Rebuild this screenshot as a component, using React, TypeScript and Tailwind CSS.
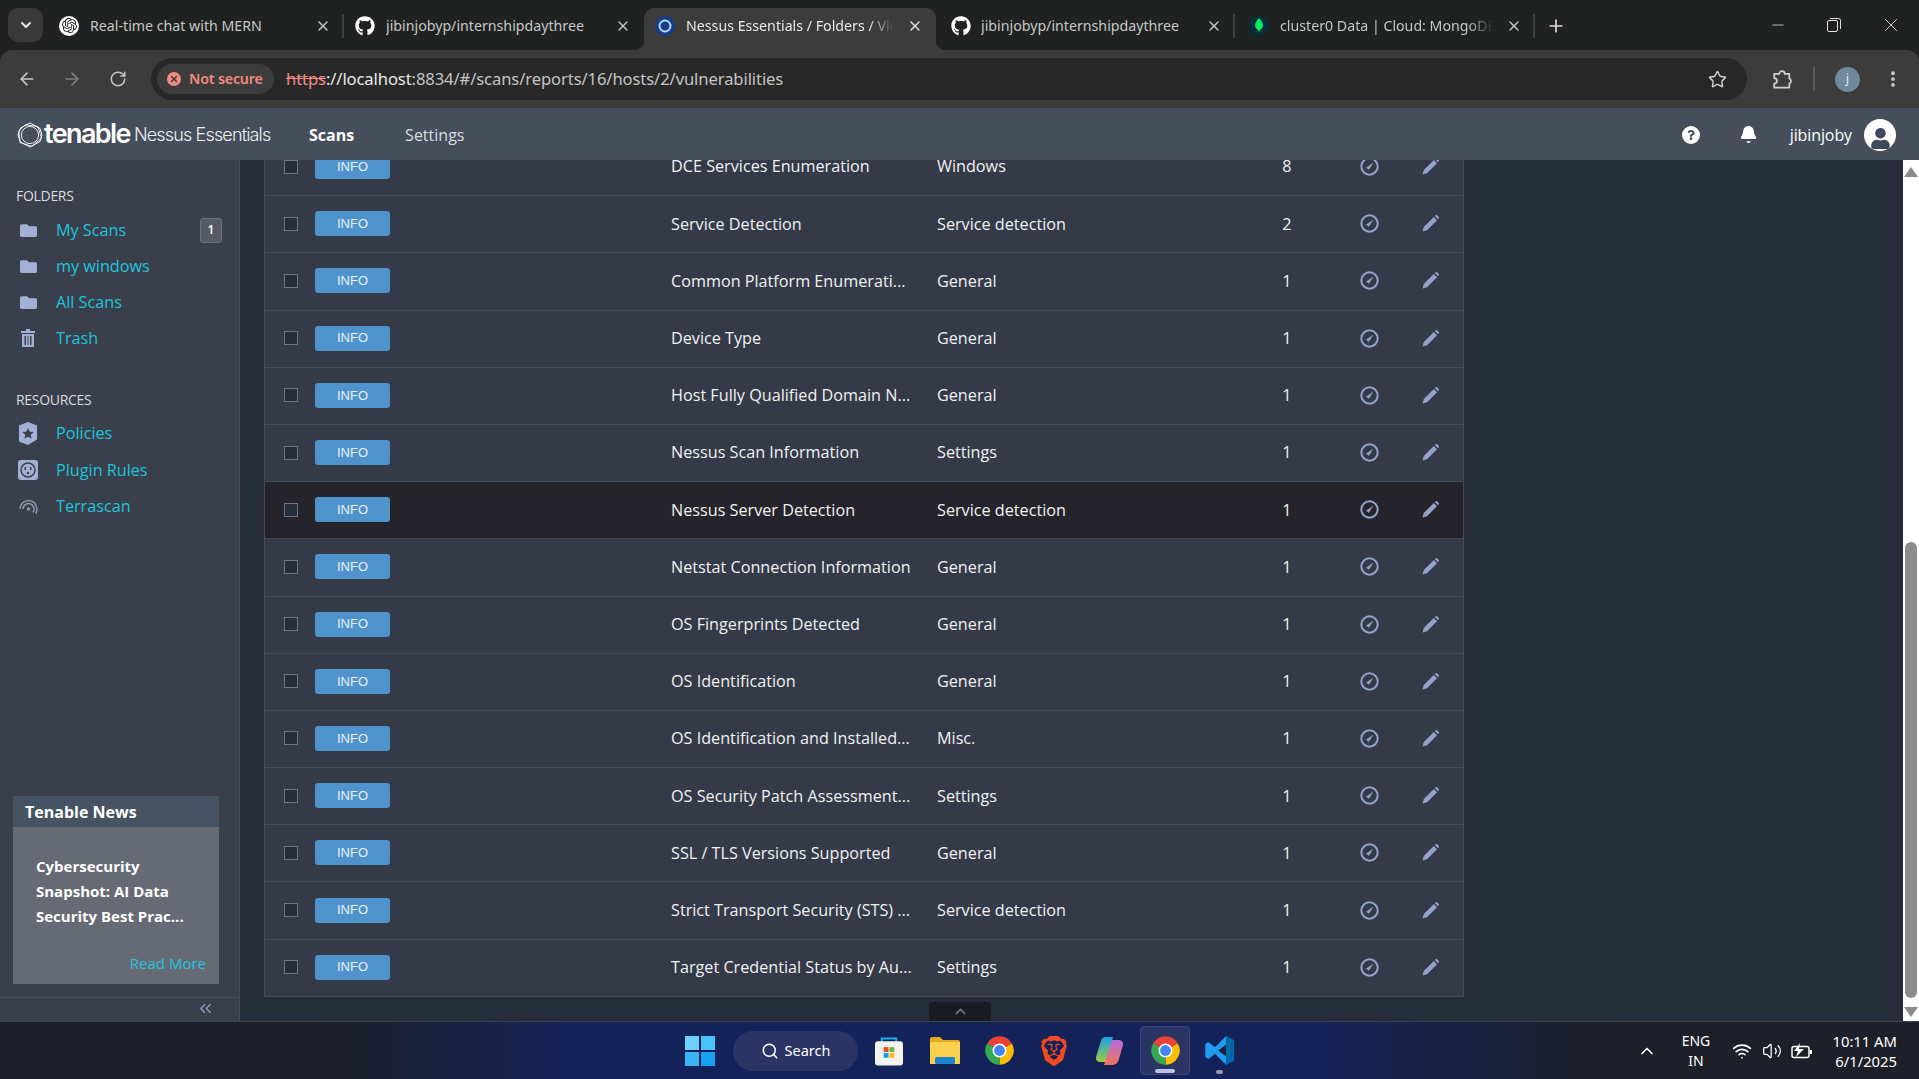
import { Bell, ChevronDown, ChevronUp, ChevronsLeft, EllipsisVertical, Plus, RotateCw, ArrowLeft, ArrowRight, Search, Star, X, Minus, Wifi, Volume2 } from "lucide-react";
import { FaGithub, FaUser, FaFolder, FaQuestion } from "react-icons/fa";
import { SiOpenai, SiBrave } from "react-icons/si";

const winFont = "font-['Noto_Sans',sans-serif]";

const rows = [
  ["DCE Services Enumeration", "Windows", "8"],
  ["Service Detection", "Service detection", "2"],
  ["Common Platform Enumerati...", "General", "1"],
  ["Device Type", "General", "1"],
  ["Host Fully Qualified Domain N...", "General", "1"],
  ["Nessus Scan Information", "Settings", "1"],
  ["Nessus Server Detection", "Service detection", "1"],
  ["Netstat Connection Information", "General", "1"],
  ["OS Fingerprints Detected", "General", "1"],
  ["OS Identification", "General", "1"],
  ["OS Identification and Installed...", "Misc.", "1"],
  ["OS Security Patch Assessment...", "Settings", "1"],
  ["SSL / TLS Versions Supported", "General", "1"],
  ["Strict Transport Security (STS) ...", "Service detection", "1"],
  ["Target Credential Status by Au...", "Settings", "1"],
];

function ChromeIcon({ size = 30 }: { size?: number }) {
  return (
    <svg width={size} height={size} viewBox="0 0 24 24">
      <path d="M12 12 2.47 6.5A11 11 0 0 1 21.53 6.5Z" fill="#ea4335" />
      <path d="M12 12 21.53 6.5A11 11 0 0 1 12 23Z" fill="#fbbc04" />
      <path d="M12 12 12 23A11 11 0 0 1 2.47 6.5Z" fill="#34a853" />
      <circle cx="12" cy="12" r="5.4" fill="#fff" />
      <circle cx="12" cy="12" r="4.2" fill="#4285f4" />
    </svg>
  );
}

function GaugeIcon() {
  return (
    <svg width="19" height="19" viewBox="0 0 19 19" fill="none">
      <circle cx="9.500" cy="9.500" r="8.200" stroke="#93a3cb" strokeWidth="2" />
      <path d="M6 10.800 13.500 5.500l-4.600 7.200Z" fill="#93a3cb" />
    </svg>
  );
}

function PencilIcon() {
  return (
    <svg width="17" height="17" viewBox="0 0 17 17">
      <path d="M0.5 16.5 1.8 12 11.8 2l3.2 3.2-10 10ZM12.8 1l1-.8a.9.9 0 0 1 1.2 0l1.8 1.8a.9.9 0 0 1 0 1.2l-.8 1Z" fill="#93a3cb" />
    </svg>
  );
}

function TenableMark() {
  return (
    <svg width="26" height="26" viewBox="0 0 26 26" fill="none" stroke="#fff" strokeWidth="1">
      <path d="M13 1 23 6.5 25 13 23 19.5 13 25 3.5 20 1 13 3.5 6Z" />
      <path d="M8 2.8 21 4.5 24.4 16 15 24.4 3 20.6 1.8 9Z" strokeWidth="0.8" />
      <circle cx="13" cy="13" r="8.6" strokeWidth="0.9" />
    </svg>
  );
}

function Tab({ title, icon, width, active, sep, fade }: { title: string; icon: React.ReactNode; width: string; active?: boolean; sep?: boolean; fade?: boolean }) {
  return (
    <div className={`relative flex h-[42px] shrink-0 items-center pb-[7px] ${width} ${active ? "rounded-t-[10px] bg-[#3c3c3c] text-[#e8e8e8]" : "text-[#c6c8c8]"}`}>
      {active && <span className="absolute bottom-0 left-[-10px] size-[10px] bg-[radial-gradient(circle_at_0_0,transparent_10px,#3c3c3c_10.5px)]" />}
      {active && <span className="absolute bottom-0 right-[-10px] size-[10px] bg-[radial-gradient(circle_at_100%_0,transparent_10px,#3c3c3c_10.5px)]" />}
      <span className="flex w-[42px] shrink-0 justify-center">{icon}</span>
      <span className={`min-w-0 flex-1 overflow-hidden whitespace-nowrap text-[14.200px] ${fade ? "[mask-image:linear-gradient(90deg,#000_88%,transparent)]" : ""}`}>{title}</span>
      <X size={16} strokeWidth={2} className="mx-[13px] shrink-0" />
      {sep && <span className="absolute right-0 h-[24px] w-[2px] bg-[#3f4141]" />}
    </div>
  );
}

function TabStrip() {
  return (
    <div className={`flex h-[50px] shrink-0 items-end bg-[#202222] pl-[8px] ${winFont}`}>
      <div className="mb-[8px] flex h-[34px] w-[35px] shrink-0 items-center justify-center rounded-[10px] bg-[#3a3a3a]">
        <ChevronDown size={16} strokeWidth={3} className="text-[#e6e6e6]" />
      </div>
      <div className="w-[5px] shrink-0" />
      <Tab
        width="w-[296px]"
        sep
        icon={
          <span className="flex size-[20px] items-center justify-center rounded-full bg-white">
            <SiOpenai size={15} className="text-[#222]" />
          </span>
        }
        title="Real-time chat with MERN"
      />
      <Tab width="w-[300px]" icon={<FaGithub size={20} className="text-white" />} title="jibinjobyp/internshipdaythree" />
      <Tab
        width="w-[292px]"
        active
        fade
        icon={
          <svg width="20" height="20" viewBox="0 0 20 20" fill="none">
            <circle cx="10" cy="10" r="10" fill="#123f85" />
            <circle cx="10" cy="10" r="5.5" stroke="#b7d3ef" strokeWidth="2" />
          </svg>
        }
        title="Nessus Essentials / Folders / Vie"
      />
      <Tab width="w-[299px] pl-[3px]" sep icon={<FaGithub size={20} className="ml-[2px] text-white" />} title="jibinjobyp/internshipdaythree" />
      <Tab
        width="w-[300px] pl-[3px]"
        sep
        fade
        icon={
          <span className="flex size-[20px] items-center justify-center rounded-full bg-[#062f3a]">
            <svg width="8" height="15" viewBox="0 0 8 15">
              <path d="M4 0C6 2.5 8 4.5 8 7.500 8 10 5.500 11.500 4.500 12.500L4 15 3.500 12.500C2.500 11.500 0 10 0 7.500 0 4.500 2 2.500 4 0Z" fill="#00ed64" />
            </svg>
          </span>
        }
        title="cluster0 Data | Cloud: MongoDE"
      />
      <div className="flex h-[42px] w-[42px] shrink-0 items-center justify-center pb-[7px]">
        <Plus size={20} strokeWidth={2} className="text-[#dcdcdc]" />
      </div>
      <div className="flex h-[50px] flex-1 items-center justify-end text-[#e4e4e4]">
        <span className="flex w-[56px] justify-center"><Minus size={18} strokeWidth={1} /></span>
        <span className="flex w-[56px] justify-center">
          <svg width="14" height="14" viewBox="0 0 14 14" fill="none" stroke="currentColor">
            <rect x="0.500" y="2.500" width="10" height="11" rx="1.500" />
            <path d="M3 .5h8.500a2 2 0 0 1 2 2V11" />
          </svg>
        </span>
        <span className="flex w-[57px] justify-center"><X size={22} strokeWidth={1} /></span>
      </div>
    </div>
  );
}

function Toolbar() {
  return (
    <div className={`flex h-[58px] shrink-0 items-center rounded-t-[12px] bg-[#3c3c3c] ${winFont}`}>
      <div className="flex w-[151px] shrink-0 items-center pl-[17px] text-[#c7c7c7]">
        <ArrowLeft size={20} strokeWidth={2} />
        <ArrowRight size={20} strokeWidth={2} className="ml-[25px] text-[#7e7e7e]" />
        <RotateCw size={18} strokeWidth={2} className="ml-[27px]" />
      </div>
      <div className="flex h-[42px] w-[1596px] shrink-0 items-center rounded-full bg-[#282828] pl-[6px] pr-[20px]">
        <div className="flex h-[30px] w-[117px] shrink-0 items-center rounded-full bg-[#3c3c3c] pl-[10px] text-[14.300px] font-semibold tracking-[-0.2px] text-[#f28b82]">
          <span className="mr-[8px] flex size-[14px] items-center justify-center rounded-full bg-[#f28b82]">
            <X size={10} strokeWidth={3.5} className="text-[#3c3c3c]" />
          </span>
          Not secure
        </div>
        <div className="ml-[12px] flex-1 whitespace-nowrap text-[16.600px] tracking-[-0.1px] text-[#e8e8e8]">
          <span className="text-[#f28b82] line-through decoration-[#f28b82]">https</span>
          <span>://localhost</span>
          <span className="text-[#c4c4c4]">:8834/#/scans/reports/16/hosts/2/vulnerabilities</span>
        </div>
        <Star size={19} strokeWidth={1.8} className="text-[#d0d0d0]" />
      </div>
      <svg width="22" height="22" viewBox="0 0 24 24" fill="none" stroke="#d0d0d0" strokeWidth="1.900" className="ml-[24px] shrink-0">
        <path d="M3.500 6.500h5.500a3 3 0 0 1 6 0h5v5a3 3 0 0 1 0 5.500v4.500H3.500v-4.500a3 3 0 0 0 0-6Z" strokeLinejoin="round" />
      </svg>
      <span className="ml-[20px] h-[24px] w-[2px] bg-[#5a5a5a]" />
      <span className="ml-[20px] flex size-[25px] items-center justify-center rounded-full bg-[#6f8a9c] text-[13px] text-[#dfe6ea]">j</span>
      <EllipsisVertical size={20} strokeWidth={2.5} className="ml-[23px] text-[#d0d0d0]" />
    </div>
  );
}

function AppHeader() {
  return (
    <div className="flex h-[52px] shrink-0 items-center bg-[#454e5a] pl-[17px] pt-[1px] font-['Open_Sans',sans-serif] text-white">
      <TenableMark />
      <span className="ml-[1px] font-['Inter',sans-serif] text-[27px] font-semibold tracking-[-1.600px]">tenable</span>
      <span className="ml-[4px] w-[136px] whitespace-nowrap font-['Inter',sans-serif] text-[18px] font-light tracking-[-0.85px] text-[#eef0f2]">Nessus Essentials</span>
      <span className="ml-[39px] text-[16px] font-bold">Scans</span>
      <span className="ml-[51px] text-[16px] text-[#d8dde3]">Settings</span>
      <div className="ml-auto flex items-center pr-[23px]">
        <span className="flex size-[18px] items-center justify-center rounded-full bg-white">
          <FaQuestion size={10} className="text-[#454e5a]" />
        </span>
        <Bell size={19} fill="#fff" strokeWidth={1.500} className="ml-[39px]" />
        <span className="ml-[32px] text-[16px] tracking-[-0.1px]">jibinjoby</span>
        <span className="ml-[12px] flex size-[32px] items-end justify-center overflow-hidden rounded-full bg-white">
          <FaUser size={21} className="mb-[2px] text-[#3d4a5c]" />
        </span>
      </div>
    </div>
  );
}

function SideItem({ icon, label, height, badge }: { icon: React.ReactNode; label: string; height: string; badge?: boolean }) {
  return (
    <div className={`flex items-center pl-[18px] ${height}`}>
      <span className="flex w-[20px] justify-center">{icon}</span>
      <span className="ml-[18px] text-[16.200px] text-[#1fc4dd]">{label}</span>
      {badge && (
        <span className="ml-auto mr-[17px] flex h-[25px] w-[22px] items-center justify-center rounded-[3px] border border-[#6b707a] bg-[#555a66] text-[12px] font-semibold text-white">1</span>
      )}
    </div>
  );
}

function Sidebar() {
  const folder = <FaFolder size={17} className="text-[#a3b1d6]" />;
  return (
    <aside className="flex w-[240px] shrink-0 flex-col border-r border-[#454b57] bg-[#3a404b] font-['Open_Sans',sans-serif]">
      <div className="pl-[16px] pt-[25px] text-[14px] tracking-[-0.3px] text-[#d9dbdf]">FOLDERS</div>
      <div className="mt-[6px]">
        <SideItem height="h-[36px]" icon={folder} label="My Scans" badge />
        <SideItem height="h-[36px]" icon={folder} label="my windows" />
        <SideItem height="h-[36px]" icon={folder} label="All Scans" />
        <SideItem
          height="h-[36px]"
          label="Trash"
          icon={
            <svg width="14" height="18" viewBox="0 0 14 18" fill="#a3b1d6">
              <path d="M5 0h4v2h5v2H0V2h5ZM1 5h12v12a1 1 0 0 1-1 1H2a1 1 0 0 1-1-1ZM3.500 7v9h1.500V7Zm3 0v9h1V7Zm2.500 0v9h1.500V7Z" fillRule="evenodd" />
            </svg>
          }
        />
      </div>
      <div className="mt-[33px] pl-[16px] text-[14px] tracking-[-0.3px] text-[#d9dbdf]">RESOURCES</div>
      <div className="mt-[5px]">
        <SideItem
          height="h-[37px]"
          label="Policies"
          icon={
            <svg width="18" height="23" viewBox="0 0 18 23">
              <path d="M9 0 18 3.500V17.500L9 23 0 19.500V3.500Z" fill="#a3b1d6" />
              <path d="m9 6 1.700 3.700 4 .4-3 2.700.9 4L9 14.700 5.400 16.800l.9-4-3-2.700 4-.4Z" fill="#3a404b" />
            </svg>
          }
        />
        <SideItem
          height="h-[36px]"
          label="Plugin Rules"
          icon={
            <svg width="20" height="20" viewBox="0 0 20 20">
              <rect width="20" height="20" rx="3" fill="#a3b1d6" />
              <circle cx="10" cy="10" r="7" fill="none" stroke="#3a404b" strokeWidth="1.500" />
              <rect x="6.500" y="7" width="1.500" height="3" fill="#3a404b" />
              <rect x="12" y="7" width="1.500" height="3" fill="#3a404b" />
              <circle cx="10" cy="13" r="1.200" fill="#3a404b" />
            </svg>
          }
        />
        <SideItem
          height="h-[36px]"
          label="Terrascan"
          icon={
            <svg width="19" height="17" viewBox="0 0 19 17" fill="none" stroke="#8f98b0" strokeWidth="1.500">
              <path d="M1 11a8.500 8.500 0 0 1 17 0c0 2-.5 3.500-1.200 5" />
              <path d="M4 11a5.500 5.500 0 0 1 11 0c0 1.500-.4 2.500-1 3.500" />
              <circle cx="9.500" cy="11" r="1.700" fill="#8f98b0" stroke="none" />
            </svg>
          }
        />
      </div>
      <div className="mt-auto mx-[13px] mb-[13px] w-[206px]">
        <div className="flex h-[31px] items-center bg-[#465362] pl-[12px] text-[16px] font-bold text-white">Tenable News</div>
        <div className="flex h-[157px] flex-col bg-[#666a75] pl-[23px] pr-[13px]">
          <div className="pt-[27px] text-[15px] font-bold leading-[25px] text-white">
            Cybersecurity
            <br />
            Snapshot: AI Data
            <br />
            Security Best Prac...
          </div>
          <div className="mt-[23px] text-right text-[15px] text-[#1fc4dd]">Read More</div>
        </div>
      </div>
      <div className="flex h-[24px] items-center justify-end border-t border-[#4a505c] pb-[2px] pr-[24px]">
        <ChevronsLeft size={19} strokeWidth={1.500} className="text-[#93a3cb]" />
      </div>
    </aside>
  );
}

function VulnRow({ name, family, count, hovered }: { name: string; family: string; count: string; hovered: boolean }) {
  return (
    <div className={`flex h-[57.200px] items-center border-b border-[#454b57] pb-[1px] pl-[19px] text-[16.200px] text-[#f1f2f4] ${hovered ? "bg-[#26242b]" : "bg-[#343a47]"}`}>
      <span className="size-[14px] shrink-0 border border-[#6a7688] bg-[#252d3b]" />
      <span className="ml-[17px] flex h-[25px] w-[75px] shrink-0 items-center justify-center rounded-[3px] bg-[#4e93cb] font-['Liberation_Sans',sans-serif] text-[13px] text-[#e9f1f8]">INFO</span>
      <span className="ml-[281px] w-[266px] shrink-0 whitespace-nowrap">{name}</span>
      <span className="w-[342px] shrink-0 whitespace-nowrap">{family}</span>
      <span className="w-[16px] shrink-0 text-center">{count}</span>
      <span className="ml-[65px] flex w-[19px] shrink-0"><GaugeIcon /></span>
      <span className="ml-[43px] flex w-[17px] shrink-0"><PencilIcon /></span>
    </div>
  );
}

function Scrollbar() {
  return (
    <div className="flex w-[16px] shrink-0 flex-col items-center bg-white">
      <svg width="14" height="10" viewBox="0 0 14 10" className="mt-[7px] shrink-0"><path d="M7 0 14 10H0Z" fill="#8c8c8c" /></svg>
      <div className="mt-[365px] h-[456px] w-[12px] shrink-0 rounded-[6px] bg-[#8c8c8c]" />
      <svg width="14" height="10" viewBox="0 0 14 10" className="mt-[9px] shrink-0"><path d="M7 10 14 0H0Z" fill="#8c8c8c" /></svg>
    </div>
  );
}

function Main() {
  return (
    <main className="relative flex min-w-0 flex-1 flex-col overflow-hidden bg-[#252d3b] pl-[24px] font-['Open_Sans',sans-serif]">
      <div className="mt-[-21px] w-[1200px] border-x border-[#454b57]">
        {rows.map((r) => (
          <VulnRow key={r[0]} name={r[0]} family={r[1]} count={r[2]} hovered={r[0] === "Nessus Server Detection"} />
        ))}
      </div>
      <div className="absolute bottom-0 left-[689px] flex h-[19px] w-[62px] items-center justify-center rounded-t-[4px] bg-[#181b21]">
        <ChevronUp size={17} strokeWidth={2.500} className="text-[#6f7378]" />
      </div>
    </main>
  );
}

function Taskbar() {
  return (
    <div className={`flex h-[58px] shrink-0 items-center border-t border-[#3e444e] bg-[linear-gradient(90deg,#1d2029_17%,#14225a_30%,#14225a_68%,#1d2029_84%)] pl-[685px] text-white ${winFont}`}>
      <svg width="30" height="30" viewBox="0 0 30 30" className="shrink-0">
        <rect width="14" height="14" fill="#6cd1fb" />
        <rect x="16" width="14" height="14" fill="#4cc2fa" />
        <rect y="16" width="14" height="14" fill="#3bb3f7" />
        <rect x="16" y="16" width="14" height="14" fill="#17a1f3" />
      </svg>
      <div className="ml-[18px] flex h-[40px] w-[125px] shrink-0 items-center justify-center rounded-full bg-[#2a3566] text-[14.500px]">
        <Search size={18} strokeWidth={2} className="mr-[6px]" />
        Search
      </div>
      <div className="ml-[17px] flex w-[28px] shrink-0 justify-center">
        <svg width="29" height="30" viewBox="0 0 29 30">
          <path d="M7 6V2h15v4" fill="none" stroke="#19b7e8" strokeWidth="2" />
          <rect y="5" width="29" height="25" rx="3" fill="#f4f2ee" />
          <rect x="9" y="11" width="5" height="5" fill="#e64b2c" />
          <rect x="15" y="11" width="5" height="5" fill="#6db33f" />
          <rect x="9" y="17" width="5" height="5" fill="#0ba4ee" />
          <rect x="15" y="17" width="5" height="5" fill="#fdb813" />
        </svg>
      </div>
      <div className="ml-[27px] flex w-[30px] shrink-0 justify-center">
        <svg width="30" height="27" viewBox="0 0 30 27">
          <path d="M0 2a2 2 0 0 1 2-2h8l3 3h15a2 2 0 0 1 2 2v20a2 2 0 0 1-2 2H2a2 2 0 0 1-2-2Z" fill="#e8a91f" />
          <rect y="5" width="30" height="22" fill="#fbd04e" />
          <rect x="5" y="20" width="20" height="7" rx="1.500" fill="#1b84d0" />
        </svg>
      </div>
      <div className="ml-[23px] flex w-[32px] shrink-0 justify-center"><ChromeIcon size={31} /></div>
      <div className="ml-[23px] flex w-[32px] shrink-0 justify-center"><SiBrave size={30} className="text-[#f3491f]" /></div>
      <div className="ml-[23px] flex w-[32px] shrink-0 justify-center">
        <svg width="29" height="30" viewBox="0 0 29 30">
          <defs>
            <linearGradient id="cp1" x1="0" y1="0" x2="0" y2="1">
              <stop offset="0" stopColor="#1a9fe8" />
              <stop offset="1" stopColor="#9ecb3c" />
            </linearGradient>
            <linearGradient id="cp2" x1="0" y1="0" x2="0" y2="1">
              <stop offset="0" stopColor="#b56be0" />
              <stop offset="1" stopColor="#f2765c" />
            </linearGradient>
          </defs>
          <path d="M10 1h8L12 26H5a4 4 0 0 1-4-5L6 5a5 5 0 0 1 4-4Z" fill="url(#cp1)" />
          <path d="M17 29h-8l8-25h7a4 4 0 0 1 4 5l-4 14a7 7 0 0 1-7 6Z" fill="url(#cp2)" />
        </svg>
      </div>
      <div className="relative ml-[15px] flex h-[49px] w-[50px] shrink-0 items-center justify-center rounded-[4px] border border-[#3a4475] bg-[#2a3566]">
        <ChromeIcon size={31} />
        <span className="absolute bottom-[1px] h-[4px] w-[20px] rounded-full bg-[#bcc0ea]" />
      </div>
      <div className="relative ml-[13px] flex h-[49px] w-[32px] shrink-0 items-center justify-center">
        <svg width="31" height="31" viewBox="0 0 24 24">
          <path d="M17 1 8.500 9.500 3.500 5.500 1 7v10l2.500 1.500 5-4L17 23l6-3V4Z" fill="#1f9cf0" />
          <path d="M17 1v22l6-3V4Z" fill="#0065a9" />
          <path d="M17 7.500 11 12l6 4.500Z" fill="#14223f" />
        </svg>
        <span className="absolute bottom-[1px] h-[4px] w-[7px] rounded-full bg-[#9a9aa6]" />
      </div>
      <ChevronUp size={20} strokeWidth={2} className="ml-[402px] shrink-0" />
      <div className="ml-[17px] w-[44px] shrink-0 text-center text-[14px] leading-[20px]">
        ENG
        <br />
        IN
      </div>
      <Wifi size={20} strokeWidth={2} className="ml-[14px] shrink-0" />
      <Volume2 size={20} strokeWidth={1.500} className="ml-[10px] shrink-0" />
      <svg width="21" height="16" viewBox="0 0 21 16" fill="none" className="ml-[9px] shrink-0">
        <rect x="1" y="3.500" width="17" height="11" rx="2" stroke="#fff" strokeWidth="1.500" />
        <rect x="19" y="7" width="2" height="4" fill="#fff" />
        <path d="M9 0 3 8h4l-2 6 8-8H8Z" fill="#fff" />
      </svg>
      <div className="ml-[0px] w-[85px] shrink-0 text-right text-[14.800px] leading-[20px]">
        10:11 AM
        <br />
        6/1/2025
      </div>
    </div>
  );
}

export default function App() {
  return (
    <div className="flex h-[1079px] w-[1919px] flex-col overflow-hidden bg-[#202222]">
      <TabStrip />
      <Toolbar />
      <AppHeader />
      <div className="flex min-h-0 flex-1">
        <Sidebar />
        <Main />
        <Scrollbar />
      </div>
      <Taskbar />
    </div>
  );
}
